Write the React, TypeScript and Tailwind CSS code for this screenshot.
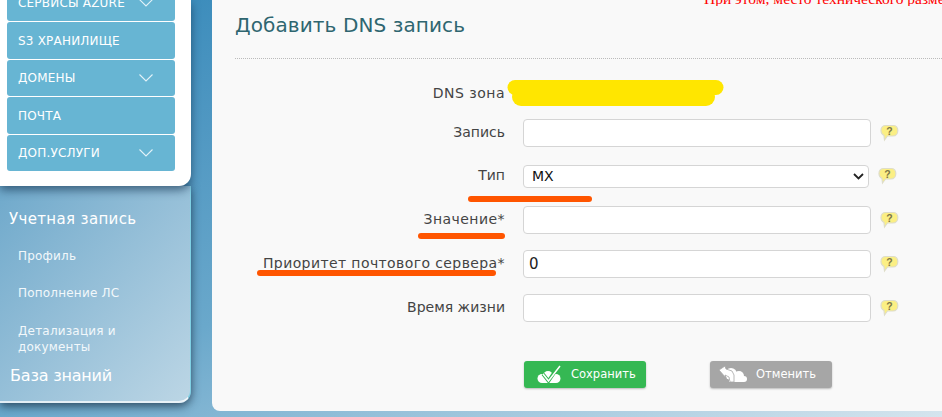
const menu = [
  { title: 'СЕРВИСЫ AZURE', arrow: true, cls: 'h-[37px] -mt-[16px]' },
  { title: 'S3 ХРАНИЛИЩЕ', arrow: false, cls: 'h-[37px]' },
  { title: 'ДОМЕНЫ', arrow: true, cls: 'h-[36px]' },
  { title: 'ПОЧТА', arrow: false, cls: 'h-[37px]' },
  { title: 'ДОП.УСЛУГИ', arrow: true, cls: 'h-[36px]' },
]

function Help({ className = '' }: { className?: string }) {
  return (
    <svg width="19" height="19" viewBox="0 0 19 19" className={className}>
      <path d="M6 1.500h7c3 0 4.800 2 4.800 5s-1.800 5.500-4.800 5.500H7.500L4.500 16 4 11.500C2 10.500 1 8.800 1 6.500 1 3.500 3 1.500 6 1.500z" fill="#fbef84" stroke="#deddc9" strokeWidth="1.200" />
      <text x="9.500" y="11" textAnchor="middle" fontSize="10.500" fontWeight="700" fill="#7d7748" fontFamily="'Liberation Sans', sans-serif">?</text>
    </svg>
  )
}

function Row({ label, star, value, track = '', mb }: { label: string; star?: boolean; value?: string; track?: string; mb: string }) {
  return (
    <div className={`flex items-center ${mb}`}>
      <div className={`w-[270px] text-right text-[14px] text-[#444] -mt-[2px] ${track}`}>
        {label}
        {star && <span>*</span>}
      </div>
      <div className="ml-[18px] w-[348px] h-[28px] bg-white border border-[#d5d5d5] rounded-[4px] px-[5px] text-[15px] text-[#222] flex items-center">
        {value}
      </div>
      <Help className="ml-[9px] mt-[1px]" />
    </div>
  )
}

export default function App() {
  return (
    <div
      className="relative w-[942px] h-[417px] overflow-hidden flex items-start bg-gradient-to-br from-[#2f86b8] via-[#6aa8cb] to-[#d5e5ee]"
      style={{ fontFamily: "'DejaVu Sans', Tahoma, sans-serif" }}
    >
      <div className="w-[191px] shrink-0">
        <div className="flex flex-col bg-white rounded-br-[12px] pl-[7px] pr-[16px] h-[186px] shadow-[0_4px_10px_rgba(20,50,80,0.65)] relative z-10">
          {menu.map((m) => (
            <div
              key={m.title}
              className={`${m.cls} shrink-0 mb-px bg-[#67b5d3] rounded-[3px] flex items-center justify-between pl-[11px] pr-[22px] text-[12px] tracking-[0.2px] text-white`}
            >
              <span>{m.title}</span>
              {m.arrow && (
                <svg width="14" height="8" viewBox="0 0 14 8" fill="none" stroke="#e2f2f8" strokeWidth="1.100">
                  <path d="M0.500 0.500L7 7L13.500 0.500" />
                </svg>
              )}
            </div>
          ))}
        </div>
        <div className="h-[217px] rounded-br-[12px] border-r border-b-2 border-white/80 border-r-[#7fd0e4] bg-gradient-to-br from-[#6fa9cb] to-[#bcd6e5] shadow-[0_3px_10px_rgba(20,40,60,0.75)] text-white pt-[22px]">
          <div className="pl-[9px] text-[15px] leading-[22px] tracking-[0.35px]">Учетная запись</div>
          <div className="pl-[18px] text-[12px] leading-[16px] tracking-[0.2px] text-[#f2f8fb]">
            <div className="mt-[18px]">Профиль</div>
            <div className="mt-[21px]">Пополнение ЛС</div>
            <div className="mt-[22px] w-[140px]">Детализация и документы</div>
          </div>
          <div className="pl-[10px] text-[16px] leading-[22px] tracking-[-0.2px] mt-[10px]">База знаний</div>
        </div>
      </div>

      <div className="ml-[21px] flex-1 h-[411px] bg-[#f9f9f9] rounded-bl-[8px] pl-[23px] overflow-hidden">
        <div className="h-[15px] -mt-[9px] whitespace-nowrap text-[15.500px] leading-[15px] text-[#ff0000] pl-[469px] overflow-hidden" style={{ fontFamily: "'Liberation Serif', serif" }}>
          При этом, место технического размещения
        </div>
        <h1 className="mt-[5px] text-[20px] leading-[28px] text-[#2f6670] font-normal tracking-[0.1px]">Добавить DNS запись</h1>
        <div className="mt-[19px] border-t border-dotted border-[#bbb]" />
        <div className="mt-[21px] flex items-center h-[27px] mb-[12px]">
          <div className="w-[270px] text-right text-[14px] text-[#444] tracking-[0.5px]">DNS зона</div>
        </div>
        <Row label="Запись" mb="mb-[18px]" />
        <div className="flex items-center mb-[18px]">
          <div className="w-[270px] text-right text-[14px] text-[#444] -mt-[2px]">Тип</div>
          <div className="ml-[18px] w-[346px] h-[23px] bg-white border border-[#d5d5d5] rounded-[4px] pl-[8px] pr-[4px] text-[14px] text-[#111] flex items-center justify-between">
            MX
            <svg width="11" height="7" viewBox="0 0 11 7" fill="none" stroke="#222" strokeWidth="1.800">
              <path d="M1 1L5.500 5.500L10 1" />
            </svg>
          </div>
          <Help className="ml-[9px] -mt-px" />
        </div>
        <Row label="Значение" star track="tracking-[0.45px]" mb="mb-[16px]" />
        <Row label="Приоритет почтового сервера" star value="0" track="tracking-[0.4px]" mb="mb-[16px]" />
        <Row label="Время жизни" mb="mb-[39px]" />
        <div className="flex pl-[289px] gap-[64px]">
          <button className="w-[122px] h-[27px] rounded-[3px] bg-[#35b853] shadow-[0_1px_2px_rgba(0,0,0,0.25)] text-white text-[11.500px] flex items-center pl-[12px] gap-[9px]">
            <svg width="26" height="20" viewBox="0 0 26 20">
              <circle cx="6" cy="13.500" r="4.500" fill="#fff" />
              <circle cx="12" cy="11" r="5" fill="#fff" />
              <circle cx="20" cy="13.500" r="4.500" fill="#fff" />
              <rect x="6" y="12" width="14" height="6" fill="#fff" />
              <path d="M7 9l5.500 7L22 2" fill="none" stroke="#35b853" strokeWidth="3.600" />
              <path d="M7 9l5.500 7L24 1" fill="none" stroke="#fff" strokeWidth="1.500" />
            </svg>
            Сохранить
          </button>
          <button className="w-[122px] h-[27px] rounded-[3px] bg-[#a6a6a6] shadow-[0_1px_2px_rgba(0,0,0,0.25)] text-white text-[11.500px] flex items-center pl-[8px] gap-[8px]">
            <svg width="30" height="18" viewBox="0 0 30 18">
              <circle cx="13" cy="8" r="6" fill="#fff" />
              <circle cx="21" cy="10" r="5" fill="#fff" />
              <circle cx="26" cy="13" r="3" fill="#fff" />
              <rect x="11" y="10" width="15" height="6" fill="#fff" />
              <path d="M1 4l6-4 1 3 6 2 2 4v7h-4l-1-5-4-2 1 3z" fill="#fff" stroke="#a6a6a6" strokeWidth="0.800" />
            </svg>
            Отменить
          </button>
        </div>
      </div>

      {/* пометки поверх скриншота */}
      <svg className="absolute left-[505px] top-[78px]" width="222" height="30" viewBox="0 0 222 30">
        <path d="M10 9.500H211" stroke="#ffe600" strokeWidth="15" strokeLinecap="round" fill="none" />
        <path d="M16 19H201" stroke="#ffe600" strokeWidth="18" strokeLinecap="round" fill="none" />
      </svg>
      <div className="absolute left-[468px] top-[196px] w-[124px] h-[6px] rounded-full bg-[#ff5500]" />
      <div className="absolute left-[418px] top-[233px] w-[87px] h-[6px] rounded-full bg-[#ff5500]" />
      <div className="absolute left-[257px] top-[270px] w-[239px] h-[6px] rounded-full bg-[#ff5500]" />
    </div>
  )
}
